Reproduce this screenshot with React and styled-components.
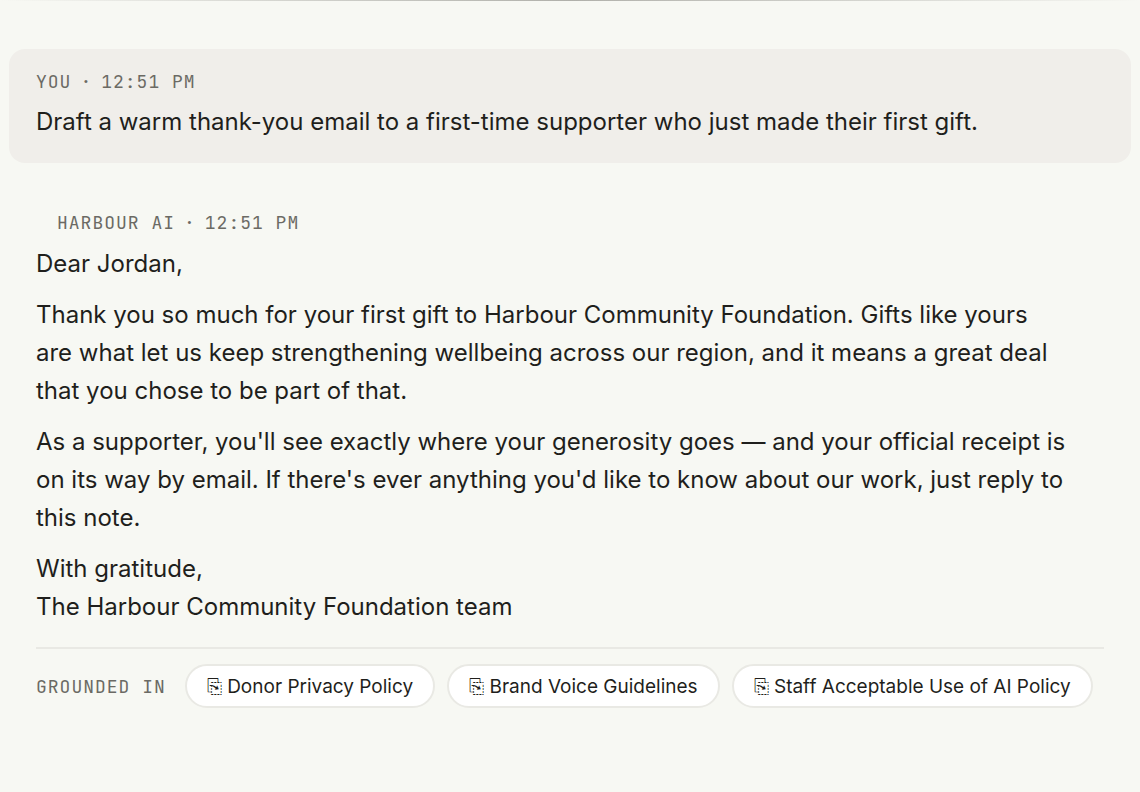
import React from 'react';
import styled, { createGlobalStyle } from 'styled-components';

const SOURCES = [
  'Donor Privacy Policy',
  'Brand Voice Guidelines',
  'Staff Acceptable Use of AI Policy'
];

const App = () => {
  return (
    <>
      <GlobalStyle />
      <TopRule />
      <Thread>
        <Message $mine>
          <Meta>
            You<Dot>·</Dot>
            <time>12:51 PM</time>
          </Meta>
          <Paragraph>
            Draft a warm thank-you email to a first-time supporter who just made
            their first gift.
          </Paragraph>
        </Message>
        <Message>
          <Meta $indent>
            Harbour AI<Dot>·</Dot>
            <time>12:51 PM</time>
          </Meta>
          <Paragraph>Dear Jordan,</Paragraph>
          <Paragraph>
            Thank you so much for your first gift to Harbour Community
            Foundation. Gifts like yours are what let us keep strengthening
            wellbeing across our region, and it means a great deal that you
            chose to be part of that.
          </Paragraph>
          <Paragraph>
            As a supporter, you'll see exactly where your generosity goes — and
            your official receipt is on its way by email. If there's ever
            anything you'd like to know about our work, just reply to this note.
          </Paragraph>
          <Paragraph>
            With gratitude,
            <br />
            The Harbour Community Foundation team
          </Paragraph>
          <Sources>
            <SourcesLabel>Grounded in</SourcesLabel>
            {SOURCES.map(name => (
              <Chip key={name} type="button">
                ⎘ {name}
              </Chip>
            ))}
          </Sources>
        </Message>
      </Thread>
    </>
  );
};

const GlobalStyle = createGlobalStyle`
  * {
    box-sizing: border-box;
  }
  body {
    margin: 0;
    background: #f7f8f3;
    color: #1f1f1c;
    font-family: Inter, sans-serif;
  }
`;

const TopRule = styled.div`
  height: 1px;
  background: linear-gradient(90deg, transparent, #b0b0aa, transparent);
`;

const Thread = styled.main`
  display: flex;
  flex-direction: column;
  gap: 27px;
  padding: 48px 9px;
`;

const Message = styled.article`
  padding: 19px 27px 22px;
  border-radius: 16px;
  background: ${({ $mine }) => ($mine ? '#f0eeea' : 'transparent')};
`;

const Meta = styled.header`
  display: flex;
  margin-bottom: ${({ $indent }) => ($indent ? '8px' : '7px')};
  padding-left: ${({ $indent }) => ($indent ? '21px' : '0')};
  font-family: 'JetBrains Mono', 'Liberation Mono', monospace;
  font-size: 18px;
  line-height: 28px;
  letter-spacing: 1px;
  text-transform: uppercase;
  color: #6b6a64;
`;

const Dot = styled.span`
  margin: 0 9px;
`;

const Paragraph = styled.p`
  margin: 0 0 13px;
  max-width: 1032px;
  font-size: 24px;
  line-height: 38px;

  &:last-child {
    margin-bottom: 0;
  }
`;

const Sources = styled.footer`
  display: flex;
  flex-wrap: wrap;
  align-items: center;
  gap: 12px;
  margin-top: 21px;
  padding-top: 15px;
  border-top: 2px solid #e9e9e4;
`;

const SourcesLabel = styled.span`
  margin-right: 7px;
  font-family: 'JetBrains Mono', 'Liberation Mono', monospace;
  font-size: 18px;
  letter-spacing: 1px;
  text-transform: uppercase;
  color: #6b6a64;
`;

const Chip = styled.button`
  height: 44px;
  padding: 0 20px;
  border: 2px solid #e9e9e4;
  border-radius: 22px;
  background: #fff;
  color: #1f1f1c;
  font-family: Inter, sans-serif;
  font-size: 19px;
  white-space: nowrap;
  cursor: pointer;
`;

export default App;
